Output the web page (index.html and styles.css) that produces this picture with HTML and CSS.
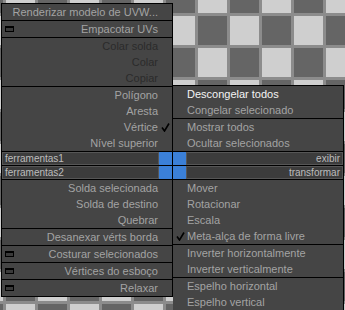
FILE: index.html
```html
<!DOCTYPE html>
<html lang="pt">
<head>
  <meta charset="UTF-8" />
  <title>Quad menu - Editar UVWs</title>
  <link rel="stylesheet" href="styles.css">
</head>
<body>
  <div class="viewport">
    <div class="quad-menu">

      <div class="quad quad-tl">
        <div class="item"><span class="label">Renderizar modelo de UVW...</span><span class="check"></span></div>
        <div class="item caddy sep"><span class="box"></span><span class="label">Empacotar UVs</span><span class="check"></span></div>
        <div class="item disabled sep"><span class="label">Colar solda</span><span class="check"></span></div>
        <div class="item disabled"><span class="label">Colar</span><span class="check"></span></div>
        <div class="item disabled"><span class="label">Copiar</span><span class="check"></span></div>
        <div class="item sep"><span class="label">Polígono</span><span class="check"></span></div>
        <div class="item"><span class="label">Aresta</span><span class="check"></span></div>
        <div class="item"><span class="label">Vértice</span><span class="check"><svg width="9" height="9" viewBox="0 0 9 9"><path d="M1 4.5 L3.5 8 L8 0.5" fill="none" stroke="#000" stroke-width="1.6"/></svg></span></div>
        <div class="item"><span class="label">Nível superior</span><span class="check"></span></div>
      </div>

      <div class="quad quad-tr">
        <div class="item active"><span class="check"></span><span class="label">Descongelar todos</span></div>
        <div class="item"><span class="check"></span><span class="label">Congelar selecionado</span></div>
        <div class="item sep"><span class="check"></span><span class="label">Mostrar todos</span></div>
        <div class="item"><span class="check"></span><span class="label">Ocultar selecionados</span></div>
      </div>

      <div class="titles titles-left">
        <div class="title-row"><span class="title-bar">ferramentas1</span><span class="title-mark"></span></div>
        <div class="title-row"><span class="title-bar">ferramentas2</span><span class="title-mark"></span></div>
      </div>

      <div class="titles titles-right">
        <div class="title-row"><span class="title-mark"></span><span class="title-bar">exibir</span></div>
        <div class="title-row"><span class="title-mark"></span><span class="title-bar">transformar</span></div>
      </div>

      <div class="quad quad-bl">
        <div class="item"><span class="label">Solda selecionada</span><span class="check"></span></div>
        <div class="item"><span class="label">Solda de destino</span><span class="check"></span></div>
        <div class="item"><span class="label">Quebrar</span><span class="check"></span></div>
        <div class="item caddy sep"><span class="label">Desanexar vérts borda</span><span class="check"></span></div>
        <div class="item caddy sep"><span class="box"></span><span class="label">Costurar selecionados</span><span class="check"></span></div>
        <div class="item caddy sep"><span class="box"></span><span class="label">Vértices do esboço</span><span class="check"></span></div>
        <div class="item caddy sep"><span class="box"></span><span class="label">Relaxar</span><span class="check"></span></div>
      </div>

      <div class="quad quad-br">
        <div class="item"><span class="check"></span><span class="label">Mover</span></div>
        <div class="item"><span class="check"></span><span class="label">Rotacionar</span></div>
        <div class="item"><span class="check"></span><span class="label">Escala</span></div>
        <div class="item"><span class="check"><svg width="9" height="9" viewBox="0 0 9 9"><path d="M1 4.5 L3.5 8 L8 0.5" fill="none" stroke="#000" stroke-width="1.6"/></svg></span><span class="label">Meta-alça de forma livre</span></div>
        <div class="item sep"><span class="check"></span><span class="label">Inverter horizontalmente</span></div>
        <div class="item"><span class="check"></span><span class="label">Inverter verticalmente</span></div>
        <div class="item sep"><span class="check"></span><span class="label">Espelho horizontal</span></div>
        <div class="item"><span class="check"></span><span class="label">Espelho vertical</span></div>
      </div>

    </div>
  </div>
</body>
</html>
```

FILE: styles.css
```css
html, body {
  margin: 0;
  padding: 0;
}
body {
  width: 345px;
  height: 310px;
  overflow: hidden;
  font-family: 'Liberation Sans', Arial, sans-serif;
  font-size: 11px;
}
.viewport {
  position: relative;
  width: 345px;
  height: 310px;
  background-color: #656565;
  background-image:
    linear-gradient(to right, #8c8c8c 3px, transparent 3px),
    linear-gradient(to bottom, #8c8c8c 3px, transparent 3px),
    conic-gradient(#656565 25%, #cfcfcf 0 50%, #656565 0 75%, #cfcfcf 0);
  background-size: 32px 32px, 32px 32px, 64px 64px;
  background-position: 3px 0, 0 13px, 35px 13px;
}
.quad-menu {
  position: absolute;
  left: 1px;
  top: 3px;
  display: grid;
  grid-template-columns: 172px 171px;
}
.quad {
  background: #454545;
  color: #a3a3a3;
}
.quad-tl {
  border: 1px solid #000;
  border-bottom: none;
}
.quad-tr {
  align-self: end;
  border-top: 1px solid #000;
  border-right: 1px solid #000;
}
.quad-bl {
  align-self: start;
  border: 1px solid #000;
  border-top: none;
}
.quad-br {
  align-self: start;
  border-right: 1px solid #000;
  border-bottom: 1px solid #000;
}
.item {
  display: flex;
  align-items: center;
  height: 16px;
  line-height: 16px;
  white-space: nowrap;
}
.quad-tl .item, .quad-bl .item {
  justify-content: flex-end;
}
.item.sep {
  border-top: 1px solid #000;
}
.item.disabled {
  color: #2b2b2b;
}
.item.active {
  color: #f4f4f4;
}
.check {
  width: 14px;
  height: 16px;
  flex: none;
  display: flex;
  align-items: center;
  justify-content: center;
}
.box {
  width: 7px;
  height: 3px;
  margin: 0 auto 0 3px;
  border: 1px solid #000;
  border-top-width: 2px;
  background: #3a3a3a;
}
.titles {
  background: #000;
  border-top: 1px solid #000;
  border-left: 1px solid #000;
  border-right: 1px solid #000;
}
.titles-right {
  border-left: none;
}
.title-row {
  display: flex;
  height: 13px;
  border-bottom: 1px solid #000;
}
.title-bar {
  flex: 1;
  box-sizing: border-box;
  height: 13px;
  line-height: 11px;
  padding: 0 2px;
  font-size: 10px;
  color: #bdbdbd;
  background: #3c3c3c;
  border: 1px solid #565656;
}
.titles-right .title-bar {
  text-align: right;
}
.title-mark {
  width: 13px;
  flex: none;
  background: #3b80d8;
}
```
